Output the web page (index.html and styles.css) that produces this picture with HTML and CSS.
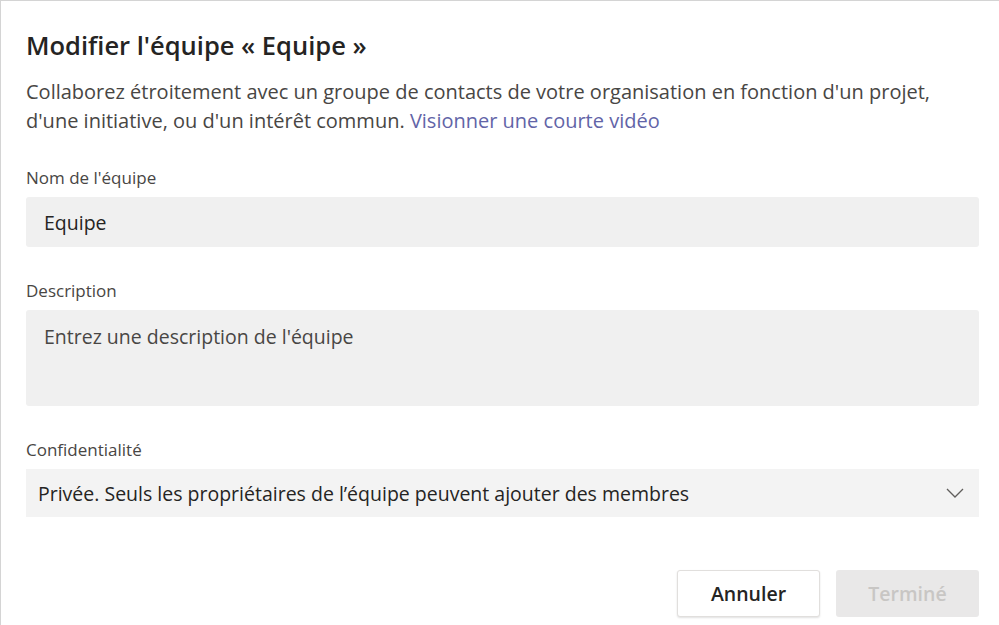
FILE: index.html
```html
<!DOCTYPE html>
<html lang="fr">
<head>
<meta charset="utf-8">
<link rel="stylesheet" href="styles.css">
</head>
<body>
<div class="dialog">
  <h1 class="title">Modifier l'équipe « Equipe »</h1>
  <p class="intro"><span>Collaborez étroitement avec un groupe de contacts de votre organisation en fonction d'un projet, d'une initiative, ou d'un intérêt commun.</span> <a class="link" href="#">Visionner une courte vidéo</a></p>
  <div class="field">
    <label class="label">Nom de l'équipe</label>
    <div class="input">Equipe</div>
  </div>
  <div class="field">
    <label class="label">Description</label>
    <div class="textarea">Entrez une description de l'équipe</div>
  </div>
  <div class="field">
    <label class="label">Confidentialité</label>
    <div class="select">
      <span>Privée. Seuls les propriétaires de l’équipe peuvent ajouter des membres</span>
      <svg class="chev" width="18" height="10" viewBox="0 0 18 10"><path d="M1 1 L9 9 L17 1" fill="none" stroke="#605e5c" stroke-width="1.3"/></svg>
    </div>
  </div>
  <div class="actions">
    <button class="btn btn-cancel">Annuler</button>
    <button class="btn btn-done">Terminé</button>
  </div>
</div>
</body>
</html>
```
FILE: styles.css
```css
html, body {
  margin: 0;
  padding: 0;
  background: #ffffff;
  overflow: hidden;
}
body {
  font-family: "Open Sans", "Noto Sans", sans-serif;
  color: #252423;
}
.dialog {
  border-top: 1px solid #d4d4d4;
  border-left: 1px solid #d4d4d4;
  padding: 22px 20px 0 25px;
  width: 999px;
  height: 640px;
  box-sizing: border-box;
}
.title {
  margin: 0;
  font-size: 25.5px;
  font-weight: 600;
  line-height: 44px;
  color: #252423;
}
.intro {
  margin: 10px 0 0 0;
  max-width: 930px;
  font-size: 20px;
  line-height: 29px;
  color: #484644;
}
.link {
  display: inline-block;
  color: #6264a7;
  text-decoration: none;
}
.field {
  margin-top: 32px;
}
.field:first-of-type {
  margin-top: 31px;
}
.label {
  display: block;
  font-size: 17px;
  line-height: 24px;
  color: #484644;
  margin-bottom: 7px;
}
.input {
  background: #f0f0f0;
  border-radius: 3px;
  height: 50px;
  display: flex;
  align-items: center;
  padding-left: 18px;
  font-size: 19.5px;
  color: #252423;
}
.textarea {
  background: #f0f0f0;
  border-radius: 3px;
  height: 96px;
  box-sizing: border-box;
  padding: 14px 18px;
  font-size: 19.5px;
  line-height: 26px;
  color: #484644;
}
.select {
  background: #f3f3f3;
  height: 48px;
  display: flex;
  align-items: center;
  justify-content: space-between;
  padding: 0 15px 0 12px;
  font-size: 19.5px;
  color: #252423;
}
.chev {
  display: block;
}
.actions {
  display: flex;
  justify-content: flex-end;
  gap: 16px;
  margin-top: 53px;
}
.btn {
  width: 143px;
  height: 47px;
  border-radius: 3px;
  font-family: "Open Sans", "Noto Sans", sans-serif;
  font-size: 19.5px;
  font-weight: 600;
}
.btn-cancel {
  background: #ffffff;
  border: 1px solid #e1dfdd;
  box-shadow: 0 1px 2px rgba(0,0,0,0.12);
  color: #252423;
}
.btn-done {
  background: #e9e8e8;
  border: none;
  color: #c8c6c4;
}
```
